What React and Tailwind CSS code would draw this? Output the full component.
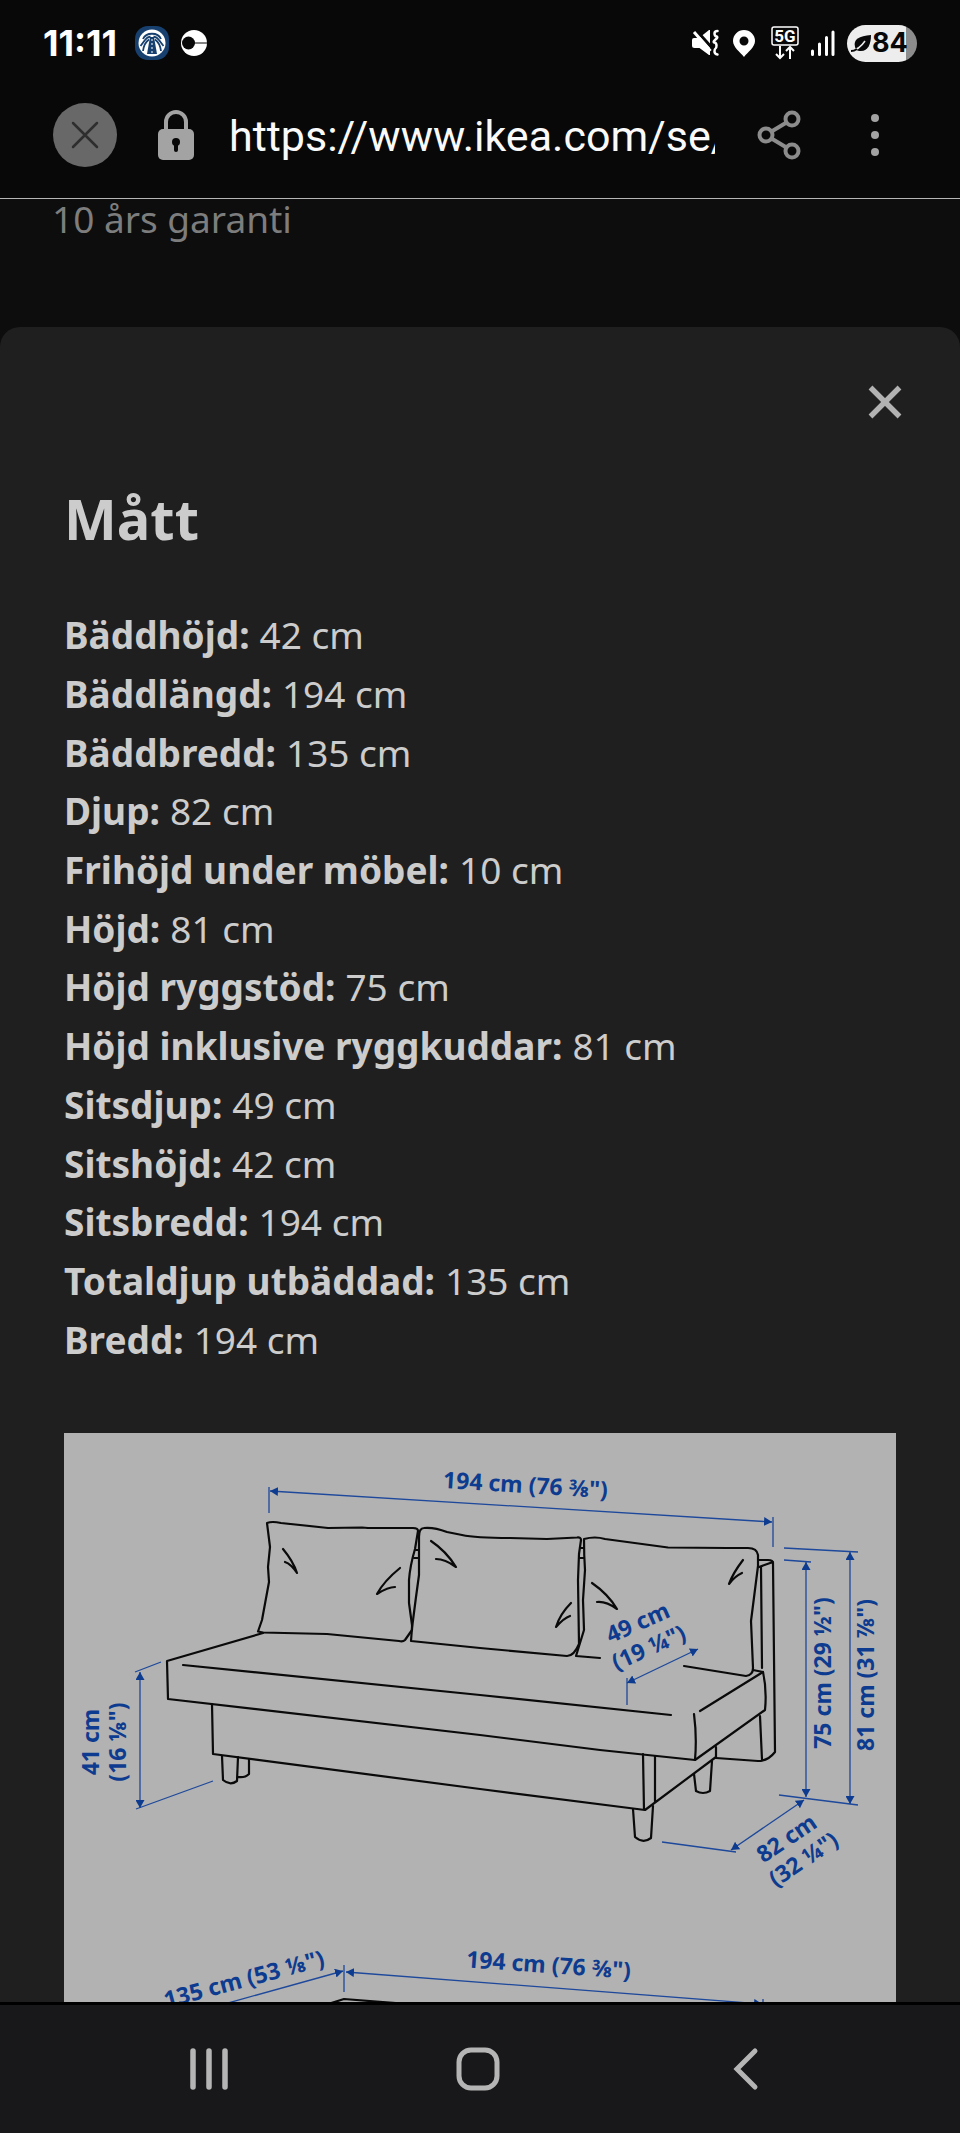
import { useState } from 'react'
import { X } from 'lucide-react'

const measurements = [
  { label: 'Bäddhöjd', value: '42 cm' },
  { label: 'Bäddlängd', value: '194 cm' },
  { label: 'Bäddbredd', value: '135 cm' },
  { label: 'Djup', value: '82 cm' },
  { label: 'Frihöjd under möbel', value: '10 cm' },
  { label: 'Höjd', value: '81 cm' },
  { label: 'Höjd ryggstöd', value: '75 cm' },
  { label: 'Höjd inklusive ryggkuddar', value: '81 cm' },
  { label: 'Sitsdjup', value: '49 cm' },
  { label: 'Sitshöjd', value: '42 cm' },
  { label: 'Sitsbredd', value: '194 cm' },
  { label: 'Totaldjup utbäddad', value: '135 cm' },
  { label: 'Bredd', value: '194 cm' },
]

const StatusBar = () => (
  <div className="flex h-[86px] items-center justify-between pl-[43px] pr-[43px] text-white">
    <div className="flex items-center">
      <span className="w-[91px] font-['Inter',sans-serif] text-[36px] font-bold leading-10">11:11</span>
      <svg width="36" height="36" viewBox="0 0 36 36" className="mr-2.5" aria-hidden="true">
        <rect x="1" y="1" width="34" height="34" rx="13" fill="#17406f" />
        <circle cx="18" cy="18" r="13.5" fill="#fff" />
        <g fill="none" stroke="#17406f" strokeWidth="1.800">
          <path d="M9 14C12 7 24 7 27 14" />
          <path d="M6.500 21L11 15Q13 12 16.500 11.500M29.500 21L25 15Q23 12 19.500 11.500" />
          <path d="M9 26Q10 18 15 14.500M27 26Q26 18 21 14.500" />
        </g>
        <path d="M16 12h4l3 17H13z" fill="#17406f" />
        <path d="M18 14v14" stroke="#fff" strokeWidth="1" strokeDasharray="2 2" />
      </svg>
      <svg width="28" height="28" viewBox="0 0 28 28" aria-hidden="true">
        <circle cx="14" cy="14" r="13" fill="#fff" />
        <circle cx="8.500" cy="14" r="6.500" fill="#080808" />
        <path d="M14 14h13" stroke="#080808" strokeWidth="1" />
      </svg>
    </div>

    <div className="flex items-center">
      <svg width="28" height="28" viewBox="0 0 28 28" className="mr-3.5" aria-hidden="true">
        <path d="M1 11q0-2 2-2h5L18 1h1v25h-1L8.500 19H3.500Q1 19 1 16.500z" fill="#fff" />
        <path d="M5 1l17 19" stroke="#080808" strokeWidth="3" />
        <path d="M3 3l16.500 19" stroke="#fff" strokeWidth="3" />
        <path
          d="M26.500 2q-3 0-3 2.500t2 3-1 3-1 3 2 3-1 3-1 3 3 3"
          fill="none"
          stroke="#fff"
          strokeWidth="2.500"
          strokeLinecap="round"
        />
      </svg>
      <svg width="22" height="28" viewBox="0 0 22 28" className="mr-4" aria-hidden="true">
        <path
          fillRule="evenodd"
          d="M11 1a11 11 0 0 1 11 11c0 6-7 11-11 16C7 23 0 18 0 12A11 11 0 0 1 11 1zm0 6.500a4.500 4.500 0 1 0 0 9 4.500 4.500 0 0 0 0-9z"
          fill="#fff"
        />
      </svg>
      <svg width="28" height="34" viewBox="0 0 28 34" className="mr-3" aria-hidden="true">
        <rect x="1" y="1" width="26" height="18" rx="2" fill="none" stroke="#fff" strokeWidth="1.500" />
        <text x="14" y="16" textAnchor="middle" fill="#fff" fontSize="17" fontWeight="700" fontFamily="Roboto, sans-serif">
          5G
        </text>
        <path d="M9 20v12M5 28l4 4 4-4M19 33V21M15 25l4-4 4 4" fill="none" stroke="#fff" strokeWidth="2" />
      </svg>
      <svg width="24" height="28" viewBox="0 0 24 28" className="mr-3" aria-hidden="true">
        <path d="M1.500 22v3.500M8.500 15v10.500M15.500 8.500v17M22 3v22.500" stroke="#fff" strokeWidth="3" strokeLinecap="round" />
      </svg>
      <div className="flex h-[37px] w-[70px] items-center rounded-full bg-linear-to-r from-[#ededed] from-84% to-[#8c8c8c] to-84% pl-1 text-[#080808]">
        <svg width="21" height="20" viewBox="0 0 21 20" className="shrink-0" aria-hidden="true">
          <path d="M4 14C2 6 8 3 20 2c0 9-3 16-10 16-2 0-4-.5-5-1.500z" fill="currentColor" />
          <path d="M0 18C6 17 10 14 14 8" stroke="#ededed" strokeWidth="1.500" fill="none" />
          <path d="M0 18q3 0 6-2" stroke="currentColor" strokeWidth="2" fill="none" />
        </svg>
        <span className="font-['Inter',sans-serif] text-[27px] font-bold leading-8">84</span>
      </div>
    </div>
  </div>
)

const AddressBar = () => (
  <div className="flex h-28 items-center pb-3.5 pl-[53px] pr-[75px]">
    <button type="button" aria-label="Stäng flik" className="flex size-16 shrink-0 items-center justify-center rounded-full bg-[#686868]">
      <svg width="28" height="28" viewBox="0 0 28 28" aria-hidden="true">
        <path d="M2 2l24 24M26 2L2 26" stroke="#2e2e2e" strokeWidth="2.500" strokeLinecap="round" />
      </svg>
    </button>
    <svg width="36" height="50" viewBox="0 0 36 50" className="ml-[41px] shrink-0" aria-hidden="true">
      <path d="M8 22V12a10 10 0 0 1 20 0v10" fill="none" stroke="#a3a3a3" strokeWidth="4" />
      <rect y="19" width="36" height="31" rx="5" fill="#a3a3a3" />
      <path d="M18 32v8" stroke="#080808" strokeWidth="4" strokeLinecap="round" />
      <circle cx="18" cy="32" r="4" fill="#080808" />
    </svg>
    <input
      type="text"
      readOnly
      aria-label="Webbadress"
      value="https://www.ikea.com/se/"
      className="ml-[35px] h-14 min-w-0 flex-1 bg-transparent pt-0.5 font-['Roboto',sans-serif] text-[43px] text-[#fafafa] outline-none"
    />
    <button type="button" aria-label="Dela" className="ml-[42px] shrink-0">
      <svg width="44" height="50" viewBox="0 0 44 50" fill="none" stroke="#8c8c8c" strokeWidth="4" aria-hidden="true">
        <circle cx="35" cy="9" r="6.500" />
        <circle cx="9" cy="25" r="6.500" />
        <circle cx="35" cy="41" r="6.500" />
        <path d="M14.500 21.500l15-9M14.500 28.500l15 9" />
      </svg>
    </button>
    <button type="button" aria-label="Fler alternativ" className="ml-16 shrink-0">
      <svg width="20" height="44" viewBox="0 0 20 44" fill="#a3a3a3" aria-hidden="true">
        <circle cx="10" cy="5" r="4" />
        <circle cx="10" cy="22" r="4" />
        <circle cx="10" cy="39" r="4" />
      </svg>
    </button>
  </div>
)

// Line drawing of the sofa with its dimensions
const SofaDiagram = () => (
  <svg viewBox="64 1433 832 832" className="block w-full bg-[#b2b2b2]" role="img" aria-label="Måttskiss av bäddsoffa">
    <defs>
      <marker id="arrow" markerUnits="userSpaceOnUse" markerWidth="8" markerHeight="9" refX="8" refY="4.500" orient="auto-start-reverse">
        <path d="M0 0l8 4.500L0 9z" fill="#0d3b8f" />
      </marker>
    </defs>

    <g fill="none" stroke="#0a0a0a" strokeWidth="2.200" strokeLinejoin="round" strokeLinecap="round">
      {/* Cushions */}
      <path d="M267 1523Q272 1521 281 1523L328 1528L362 1527.500L368 1528L413 1528Q418 1528 418 1531L415 1549Q410 1566 409 1580L409 1603L412 1625L412 1630L405 1640Q403 1642 399 1641L327 1634L263 1632.500L258 1631.500L262 1620L269 1582L268 1567L270 1547Z" />
      <path d="M411 1641L412 1628L416 1597L419 1575L419 1537Q419 1528 424 1528Q434 1527 447 1532L462 1535Q475 1538 510 1538L547 1539L577 1537.500Q581 1537 581 1540L579 1554L578 1580L579 1644Q574 1656 567 1656L480 1648Z" />
      <path d="M684 1666L746 1676Q753 1675 753 1668L751 1621L758 1566L758 1555Q757 1548 748 1548L727 1548L668 1547.500L605 1539Q595 1536 584 1539Q584 1556 585 1570L583 1600L584 1630L580 1643L576 1656L600 1658" />
      <path d="M416 1550h3M414 1558h5M581 1548h3M579 1558h5" />
      <path d="M283 1549Q293 1561 297 1573Q291 1564 285 1562" />
      <path d="M400 1568Q384 1581 377 1594Q388 1587 395 1587" />
      <path d="M431 1541Q446 1551 456 1567Q445 1559 436 1559" />
      <path d="M571 1603Q560 1614 556 1627Q564 1618 570 1616" />
      <path d="M592 1583Q608 1594 617 1609Q606 1601 597 1602" />
      <path d="M743 1560Q733 1573 729 1584Q735 1576 742 1573" />
      {/* Seat */}
      <path d="M263 1633L167 1661L168 1699L480 1735L600 1750L695 1760L765 1710Q767 1690 763 1672L753 1670" />
      <path d="M183 1665L480 1695L671 1715M694 1714Q697 1737 695 1760M700 1711L763 1672" />
      {/* Backrest */}
      <path d="M759 1560H768Q773 1560 773 1563L775 1752Q768 1761 758 1761L716 1758M759 1567L773 1562M761 1567L762 1668M760 1716L762 1760" />
      {/* Base and legs */}
      <path d="M212 1704L213 1754L480 1789L645 1810L716 1757V1747M643 1754L644 1810M655 1756V1802" />
      <path d="M222 1756L223 1780Q230 1786 237 1781L238 1757M249 1759L249 1774Q245 1778 238 1777" />
      <path d="M633 1809L635 1837Q643 1844 651 1838L653 1806" />
      <path d="M694 1774L696 1791Q703 1795 710 1791L712 1761" />
      {/* Folded out bed */}
      <path d="M325 2005L344 1999L420 2005" />
    </g>

    <g fill="none" stroke="#1d489b" strokeWidth="1.300">
      <path d="M269 1487v26M773 1517v30M784 1548l74 4M784 1560l27 2M779 1795l79 10M662 1842l74 10M627 1678v27M135 1672l26-10M136 1809l77-28M344 1965v27M763 1999v27" />
      <g markerStart="url(#arrow)" markerEnd="url(#arrow)">
        <path d="M270 1491L772 1522" />
        <path d="M806 1562V1797" />
        <path d="M850 1552V1804" />
        <path d="M804 1800L731 1850" />
        <path d="M698 1649L627 1683" />
        <path d="M140 1672V1808" />
        <path d="M346 1972L762 2004" />
        <path d="M343 1971L120 2033" />
      </g>
    </g>

    <g fill="#0d3b8f" fontFamily="'Noto Sans', sans-serif" fontSize="23" fontWeight="700" textAnchor="middle">
      <text transform="translate(525 1493) rotate(3.500)">194 cm (76 ⅜")</text>
      <text transform="translate(831 1673) rotate(-90)">75 cm (29 ½")</text>
      <text transform="translate(874 1675) rotate(-90)">81 cm (31 ⅞")</text>
      <text transform="translate(99 1742) rotate(-90)">41 cm</text>
      <text transform="translate(126 1742) rotate(-90)">(16 ⅛")</text>
      <text transform="translate(641 1630) rotate(-24)">49 cm</text>
      <text transform="translate(652 1655) rotate(-24)">(19 ¼")</text>
      <text transform="translate(791 1845) rotate(-34)">82 cm</text>
      <text transform="translate(808 1866) rotate(-34)">(32 ¼")</text>
      <text transform="translate(548 1973) rotate(4)">194 cm (76 ⅜")</text>
      <text transform="translate(246 1987) rotate(-15)">135 cm (53 ⅛")</text>
    </g>
  </svg>
)

const MeasurementSheet = ({ onClose }) => (
  <section className="mt-[88px] rounded-t-[20px] bg-[#1f1f1f] px-16 pt-12">
    <div className="flex justify-end">
      <button type="button" onClick={onClose} aria-label="Stäng" className="-mr-4 flex size-[54px] items-center justify-center text-[#b2b2b2]">
        <X size={58} strokeWidth={2.2} strokeLinecap="butt" className="shrink-0" />
      </button>
    </div>
    <h1 className="mt-[47px] text-[56px] font-bold leading-[84px]">Mått</h1>
    <dl className="mt-[46px] grid h-[763px] auto-rows-fr text-[37px] leading-[58px]">
      {measurements.map((m) => (
        <div key={m.label} className="flex items-center gap-2.5">
          <dt className="font-bold">{m.label}:</dt>
          <dd>{m.value}</dd>
        </div>
      ))}
    </dl>
    <figure className="mt-16">
      <SofaDiagram />
    </figure>
  </section>
)

const NavigationBar = () => (
  <nav className="flex h-[131px] shrink-0 items-center justify-between border-t-3 border-black bg-[#18181a] pl-[187px] pr-[192px]">
    <button type="button" aria-label="Senaste appar">
      <svg width="44" height="44" viewBox="0 0 44 44" aria-hidden="true">
        <path d="M6 4v36M22 4v36M38 4v36" stroke="#b5b5b5" strokeWidth="5.500" strokeLinecap="round" />
      </svg>
    </button>
    <button type="button" aria-label="Hem">
      <svg width="44" height="44" viewBox="0 0 44 44" aria-hidden="true">
        <rect x="3" y="3" width="38" height="38" rx="12" fill="none" stroke="#b5b5b5" strokeWidth="5" />
      </svg>
    </button>
    <button type="button" aria-label="Tillbaka">
      <svg width="44" height="44" viewBox="0 0 44 44" aria-hidden="true">
        <path d="M31 4L13 22l18 18" fill="none" stroke="#b5b5b5" strokeWidth="5" strokeLinecap="round" />
      </svg>
    </button>
  </nav>
)

const App = () => {
  const [isOpen, setIsOpen] = useState(true)

  return (
    <div className="flex h-screen flex-col bg-[#0d0d0d] font-['Noto_Sans',sans-serif] text-[#cccccc]">
      <header className="shrink-0 border-b border-[#b5b5b5] bg-[#080808]">
        <StatusBar />
        <AddressBar />
      </header>
      <main className="min-h-0 flex-1 overflow-hidden">
        <p className="px-[52px] text-[37px] leading-10 text-[#7d7d7d]">10 års garanti</p>
        {isOpen && <MeasurementSheet onClose={() => setIsOpen(false)} />}
      </main>
      <NavigationBar />
    </div>
  )
}

export default App
